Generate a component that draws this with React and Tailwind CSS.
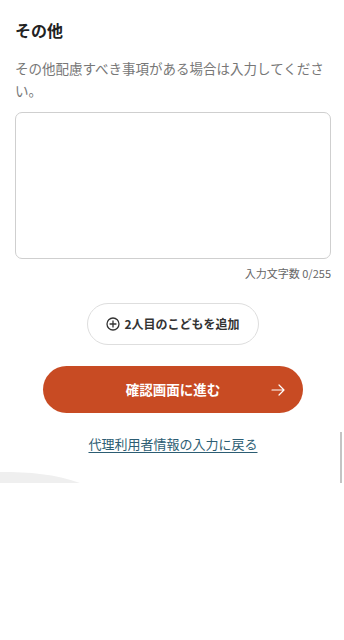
import React from "react";

export default function App() {
  const font = { fontFamily: '"Noto Sans CJK JP", "Noto Sans", sans-serif' };
  return (
    <div className="w-[344px] min-h-[640px] bg-white" style={font}>
      <div className="relative h-[483px] overflow-hidden bg-white">
        <div className="pl-[15px] pr-[13px] pt-[19px] flex flex-col">
          <h2 className="text-[16px] leading-[22px] font-bold text-[#222]">その他</h2>
          <p className="mt-[16px] text-[13.5px] leading-[22px] text-[#777]">
            その他配慮すべき事項がある場合は入力してください。
          </p>
          <textarea className="mt-[11px] h-[147px] w-full resize-none rounded-[7px] border border-[#cfcfcf] bg-white outline-none" />
          <div className="mt-[6px] text-right text-[11px] leading-[16px] text-[#666]">
            入力文字数 0/255
          </div>
          <div className="mt-[22px] flex justify-center">
            <button className="flex h-[42px] w-[172px] items-center justify-center gap-[4px] rounded-full border border-[#dedede] bg-white text-[12px] font-bold text-[#333]">
              <svg width="14" height="14" viewBox="0 0 14 14" fill="none" stroke="#333" strokeWidth="1.3">
                <circle cx="7" cy="7" r="6" />
                <path d="M7 3.6v6.8M3.6 7h6.8" />
              </svg>
              <span>2人目のこどもを追加</span>
            </button>
          </div>
          <div className="mt-[21px] flex justify-center">
            <button className="relative flex h-[47px] w-[260px] items-center justify-center rounded-full bg-[#c84b23] text-[13.5px] font-bold text-white">
              <span>確認画面に進む</span>
              <svg className="absolute right-[17px] top-1/2 -translate-y-1/2" width="16" height="16" viewBox="0 0 16 16" fill="none" stroke="#fff" strokeWidth="1.2" strokeLinecap="round" strokeLinejoin="round">
                <path d="M2 8h12M9 3l5 5-5 5" />
              </svg>
            </button>
          </div>
          <div className="mt-[21px] flex justify-center">
            <a href="#" className="text-[13px] leading-[20px] text-[#2c5d73] underline underline-offset-[3px]">
              代理利用者情報の入力に戻る
            </a>
          </div>
        </div>
        <svg className="absolute bottom-0 left-0" width="344" height="12" viewBox="0 0 344 12">
          <path d="M0 1 C30 1 55 3 80 12 L0 12 Z" fill="#efefef" />
        </svg>
        <div className="absolute right-[2px] top-[432px] h-[51px] w-[2px] bg-[#c4c4c4]" />
      </div>
    </div>
  );
}
